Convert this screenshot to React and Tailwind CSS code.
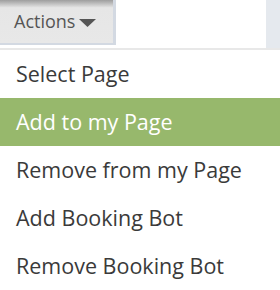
export default function App() {
  const items = [
    { label: "Select Page" },
    { label: "Add to my Page", active: true },
    { label: "Remove from my Page" },
    { label: "Add Booking Bot" },
    { label: "Remove Booking Bot" },
  ];
  return (
    <div className="w-[280px] h-[290px] bg-white overflow-hidden" style={{ fontFamily: '"Open Sans", sans-serif' }}>
      <div className="flex h-[48px] items-start justify-between">
        <div className="h-[45px] w-[116px] border-r-[3px] border-b-[2px] border-[#d3d9e2] bg-gradient-to-b from-[#9e9e9e] via-[#e6e6e6] via-[18%] to-[#e8e8e8] flex items-center pl-[14px] gap-[4px] text-[#555] text-[18px]">
          <span>Actions</span>
          <svg width="17" height="8" viewBox="0 0 17 8" className="mt-[2px]"><path d="M0 0 L17 0 L8.5 8 Z" fill="#555" /></svg>
        </div>
        <div className="w-[14px] h-[48px] bg-[#e5e9ee]" />
      </div>
      <div className="h-[2px] bg-[#e8e8e8]" />
      <ul>
        {items.map((it) => (
          <li
            key={it.label}
            className={`h-[48px] flex items-center pl-[16px] text-[21.5px] ${it.active ? "bg-[#97b86c] text-white" : "text-[#3a3a3a]"}`}
          >
            {it.label}
          </li>
        ))}
      </ul>
      <div className="h-[2px] bg-[#e8e8e8]" />
    </div>
  );
}
